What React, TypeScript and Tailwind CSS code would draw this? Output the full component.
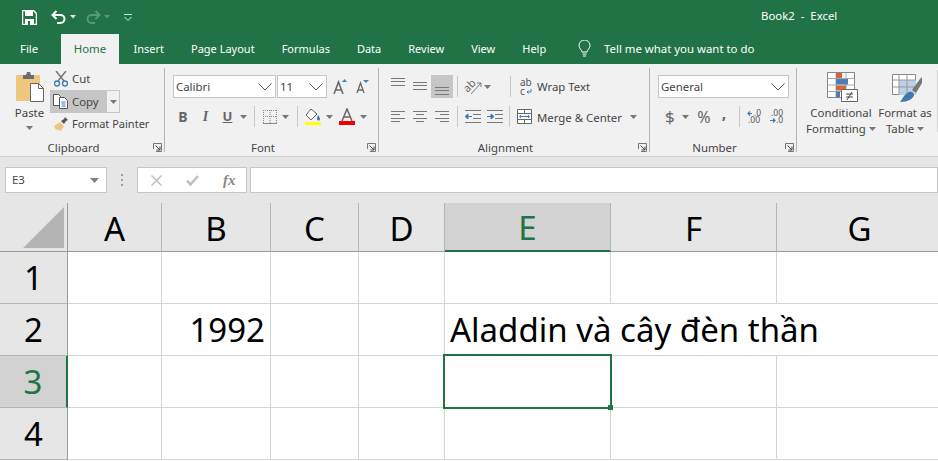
import React from 'react'

const columns = ['A', 'B', 'C', 'D', 'E', 'F', 'G']
const tabs = ['Insert', 'Page Layout', 'Formulas', 'Data', 'Review', 'View', 'Help']
const rows: { n: number; b?: string; e?: string }[] = [
  { n: 1 },
  { n: 2, b: '1992', e: 'Aladdin và cây đèn thần' },
  { n: 3 },
  { n: 4 },
]

function Caret({ className = '' }: { className?: string }) {
  return (
    <svg width="7" height="4" viewBox="0 0 7 4" className={`shrink-0 ${className}`}>
      <path d="M0 0h7L3.5 4z" fill="#777" />
    </svg>
  )
}

function Chevron({ className = '' }: { className?: string }) {
  return (
    <svg width="14" height="8" viewBox="0 0 14 8" className={`shrink-0 ${className}`}>
      <path d="M.5.5 7 7 13.5.5" fill="none" stroke="#555" />
    </svg>
  )
}

function Sep({ className = '' }: { className?: string }) {
  return <div className={`w-px h-[21px] bg-[#c6c6c6] shrink-0 ${className}`} />
}

function Launcher() {
  return (
    <svg width="9" height="9" viewBox="0 0 9 9" className="absolute right-[2px] bottom-0">
      <path d="M.5 6V.5H8.5V8.5H3" fill="none" stroke="#777" />
      <path d="M2.5 2.5 7 7M7 3.5V7H3.5" fill="none" stroke="#444" />
    </svg>
  )
}

function Lines({ rows, y }: { rows: [number, number][]; y: number }) {
  return (
    <svg width="14" height="17" viewBox="0 0 14 17" className="shrink-0">
      {rows.map(([a, b], i) => (
        <path key={i} d={`M${a} ${Math.round(y + i * 3.4) + 0.5}H${b}`} stroke="#777" />
      ))}
    </svg>
  )
}

function Cell22({ active, children }: { active?: boolean; children: React.ReactNode }) {
  return (
    <div className={`w-[22px] h-[23px] flex items-center justify-center shrink-0 ${active ? 'bg-[#c6c6c6]' : ''}`}>
      {children}
    </div>
  )
}

function Group({ w, label, launcher, children }: { w: string; label: string; launcher?: boolean; children: React.ReactNode }) {
  return (
    <div className={`relative h-[84px] mt-[4px] flex flex-col shrink-0 border-r border-[#b4b4b4] ${w}`}>
      <div className="h-[72px] shrink-0">{children}</div>
      <div className="h-[16px] leading-[16px] text-center pr-[17px] shrink-0">{label}</div>
      {launcher && <Launcher />}
    </div>
  )
}

function Box({ w, text, pad }: { w: string; text: string; pad: string }) {
  return (
    <div className={`h-[23px] bg-white border border-[#c6c6c6] flex items-center justify-between shrink-0 ${w} ${pad} pr-[3px]`}>
      <span>{text}</span>
      <Chevron />
    </div>
  )
}

function Clipboard() {
  return (
    <div className="flex">
      <div className="w-[50px] shrink-0 flex flex-col items-center pl-[9px] pt-[4px]">
        <svg width="28" height="30" viewBox="0 0 28 30">
          <rect x="0" y="3" width="24" height="26" rx="1" fill="#efc67e" />
          <path d="M7 3h3l1-3h3l1 3h3v4H7z" fill="#6d6d6d" />
          <path d="M14.5 11.5h8l5 5v13h-13z" fill="#fff" stroke="#666" />
          <path d="M22.5 11.5v5h5" fill="none" stroke="#666" />
        </svg>
        <span className="leading-[16px] mt-[3px]">Paste</span>
        <Caret className="mt-[5px]" />
      </div>
      <div className="flex flex-col">
        <div className="h-[22px] flex items-center pl-[4px] gap-[4px]">
          <svg width="14" height="16" viewBox="0 0 14 16">
            <path d="M2 0l8 10M12 0 4 10" stroke="#777" strokeWidth="1.5" />
            <circle cx="3" cy="12.5" r="2.5" fill="none" stroke="#3e78b3" strokeWidth="1.3" />
            <circle cx="11" cy="12.5" r="2.5" fill="none" stroke="#3e78b3" strokeWidth="1.3" />
          </svg>
          <span>Cut</span>
        </div>
        <div className="h-[23px] flex w-[70px]">
          <div className="w-[57px] bg-[#c6c6c6] flex items-center pl-[3px] gap-[4px]">
            <svg width="15" height="15" viewBox="0 0 15 15">
              <path d="M.5.5h5l2 2v9h-7z" fill="#fff" stroke="#555" />
              <path d="M6.5 3.5h5l3 3v8h-8z" fill="#fff" stroke="#555" />
              <path d="M8.5 8h4M8.5 10h4M8.5 12h4" stroke="#3e78b3" />
            </svg>
            <span>Copy</span>
          </div>
          <div className="w-[13px] border border-l-0 border-[#c6c6c6] flex items-center justify-center">
            <Caret />
          </div>
        </div>
        <div className="h-[23px] flex items-center pl-[3px] gap-[4px]">
          <svg width="15" height="15" viewBox="0 0 15 15">
            <path d="M1 9 7 5l4 4-3 5-2-1-1 1-1-2-1 1-1-2z" fill="#edc587" />
            <path d="M8 4l3-2 1-2 3 3-2 1-2 3z" fill="#555" />
          </svg>
          <span className="whitespace-nowrap text-[11px]">Format Painter</span>
        </div>
      </div>
    </div>
  )
}

function Font() {
  return (
    <div>
      <div className="flex items-center mt-[7px] pl-[8px] h-[23px]">
        <Box w="w-[103px]" text="Calibri" pad="pl-[2px]" />
        <Box w="w-[50px] ml-px" text="11" pad="pl-[2px]" />
        <svg width="15" height="15" viewBox="0 0 15 15" className="ml-[6px]">
          <path d="M1 15 5.5 3 10 15M2.5 11h6" fill="none" stroke="#666" strokeWidth="1.5" />
          <path d="M9 3l2.5-3L14 3z" fill="#4a7fb5" />
        </svg>
        <svg width="13" height="13" viewBox="0 0 13 13" className="ml-[8px]">
          <path d="M1 13 4.5 3 8 13M2 10h5" fill="none" stroke="#666" strokeWidth="1.3" />
          <path d="M7 0h6l-3 3z" fill="#4a7fb5" />
        </svg>
      </div>
      <div className="flex items-center mt-[7px] h-[23px] text-[#666]">
        <span className="ml-[13px] w-[10px] font-bold text-[14px] text-center">B</span>
        <span className="ml-[13px] w-[9px] italic font-bold text-[14px] text-center font-['Liberation_Serif',serif]">I</span>
        <span className="ml-[12px] w-[11px] font-bold text-[13px] text-center underline">U</span>
        <Caret className="ml-[7px]" />
        <Sep className="ml-[7px]" />
        <svg width="14" height="14" viewBox="0 0 14 14" className="ml-[8px]">
          <path d="M0 .5h14M0 6.5h14M.5 0v13M7 0v13M13.5 0v13" stroke="#888" strokeDasharray="1 1" fill="none" />
          <path d="M0 13.5h14" stroke="#888" />
        </svg>
        <Caret className="ml-[5px]" />
        <Sep className="ml-[8px]" />
        <svg width="16" height="17" viewBox="0 0 16 17" className="ml-[7px]">
          <path d="M6 1 1 7l5 5 6-6z" fill="#fff" stroke="#666" />
          <path d="M13 7c1.5 2 2 3 2 4a1.5 1.5 0 0 1-3 0c0-1 .5-2 1-4z" fill="#3e78b3" />
          <path d="M0 14h16v3H0z" fill="#ffff00" />
        </svg>
        <Caret className="ml-[5px]" />
        <svg width="16" height="17" viewBox="0 0 16 17" className="ml-[6px]">
          <path d="M3 13 8 1l5 12M4.5 9h7" fill="none" stroke="#666" strokeWidth="1.5" />
          <path d="M0 13h16v4H0z" fill="#f00000" />
        </svg>
        <Caret className="ml-[5px]" />
      </div>
    </div>
  )
}

function Alignment() {
  const indent = (flip: boolean) => (
    <svg width="16" height="13" viewBox="0 0 16 13" className="shrink-0">
      <path d="M0 .5h16M0 12.5h16M8 4.5h8M8 8.5h8" stroke="#777" />
      <path d={flip ? 'M0 6.5h4V4l3 2.5L4 9V6.5' : 'M7 6.5H3V4L0 6.5 3 9V6.5'} fill="#3e78b3" stroke="#3e78b3" />
    </svg>
  )
  const full: [number, number][] = [[0, 14], [0, 14], [0, 14]]
  return (
    <div>
      <div className="flex items-center mt-[7px] pl-[8px] h-[23px]">
        <Cell22><Lines rows={full} y={0} /></Cell22>
        <Cell22><Lines rows={full} y={4} /></Cell22>
        <Cell22 active><Lines rows={full} y={9} /></Cell22>
        <Sep className="ml-[4px]" />
        <svg width="17" height="17" viewBox="0 0 17 17" className="ml-[7px] shrink-0 overflow-visible">
          <text x="0" y="11" fontSize="11" fill="#666" fontFamily="Noto Sans" transform="rotate(-45 6 10)">ab</text>
          <path d="M6 16 16 5M12 5h4v4" fill="none" stroke="#777" />
        </svg>
        <Caret className="ml-[2px]" />
        <Sep className="ml-[19px]" />
        <svg width="12" height="18" viewBox="0 0 12 18" className="ml-[9px] shrink-0 overflow-visible">
          <text x="0" y="8" fontSize="10" fill="#555" fontFamily="Noto Sans">ab</text>
          <text x="0" y="17" fontSize="10" fill="#555" fontFamily="Noto Sans">c</text>
          <path d="M11 11v3H7M8.500 12.500 7 14l1.500 1.500" fill="none" stroke="#3e78b3" />
        </svg>
        <span className="ml-[5px] whitespace-nowrap">Wrap Text</span>
      </div>
      <div className="flex items-center mt-[7px] pl-[8px] h-[23px]">
        <Cell22><Lines rows={[[0, 14], [0, 9], [0, 14], [0, 9]]} y={3} /></Cell22>
        <Cell22><Lines rows={[[0, 14], [3, 11], [0, 14], [3, 11]]} y={3} /></Cell22>
        <Cell22><Lines rows={[[0, 14], [5, 14], [0, 14], [5, 14]]} y={3} /></Cell22>
        <Sep className="ml-[4px]" />
        <div className="ml-[7px]">{indent(false)}</div>
        <div className="ml-[6px]">{indent(true)}</div>
        <Sep className="ml-[6px]" />
        <svg width="15" height="15" viewBox="0 0 15 15" className="ml-[7px] shrink-0">
          <path d="M.5.5h14v14H.5zM.5 4.5h14M.5 10.5h14M7.5.5v4M7.5 10.5v4" fill="#fff" stroke="#666" />
          <path d="M3 7.5h9" stroke="#3e78b3" />
          <path d="M2 7.5 4 5.5v4zM13 7.5l-2-2v4z" fill="#3e78b3" />
        </svg>
        <span className="ml-[5px] pt-[2px] whitespace-nowrap">Merge &amp; Center</span>
        <Caret className="ml-[8px]" />
      </div>
    </div>
  )
}

function NumberGroup() {
  return (
    <div>
      <div className="flex items-center mt-[7px] pl-[8px] h-[23px]">
        <Box w="w-[131px]" text="General" pad="pl-[2px]" />
      </div>
      <div className="flex items-center mt-[7px] h-[23px] text-[#666]">
        <span className="ml-[15px] w-[9px] text-[17px] text-center">$</span>
        <Caret className="ml-[8px]" />
        <span className="ml-[8px] w-[14px] text-[16px] text-center">%</span>
        <span className="ml-[9px] w-[8px] text-[16px] font-bold text-center leading-[10px] pb-[8px]">,</span>
        <Sep className="ml-[11px]" />
        <svg width="14" height="14" viewBox="0 0 14 14" className="ml-[7px] shrink-0 overflow-visible">
          <path d="M5 3.5H1M3 1.5l-2 2 2 2" fill="none" stroke="#3e78b3" strokeWidth="1.2" />
          <text x="7" y="6" fontSize="8.500" fill="#555" fontFamily="Noto Sans">.0</text>
          <text x="1" y="13" fontSize="8.500" fill="#555" fontFamily="Noto Sans">.00</text>
        </svg>
        <svg width="14" height="14" viewBox="0 0 14 14" className="ml-[8px] shrink-0 overflow-visible">
          <text x="2" y="6" fontSize="8.500" fill="#555" fontFamily="Noto Sans">.00</text>
          <text x="7" y="13" fontSize="8.500" fill="#555" fontFamily="Noto Sans">.0</text>
          <path d="M1 10.5h5M4 8.5l2 2-2 2" fill="none" stroke="#3e78b3" strokeWidth="1.2" />
        </svg>
      </div>
    </div>
  )
}

function Styles() {
  return (
    <div className="flex mt-[4px] h-[84px]">
      <div className="w-[86px] shrink-0 flex flex-col items-center pt-[4px] pl-[2px]">
        <svg width="31" height="30" viewBox="0 0 31 30" className="ml-[2px]">
          <path d="M.5.5h27v25H.5z" fill="#fff" stroke="#888" />
          <path d="M9 .5v25M19 .5v25M.5 6.5h27M.5 13h27M.5 19.5h27" stroke="#aaa" />
          <path d="M9 1h6v5H9zM9 13.5h10v5H9z" fill="#d9633c" />
          <path d="M9 7h12v5.5H9zM9 19.5h4v6H9z" fill="#4a7fb5" />
          <path d="M14.5 17.5h16v12h-16z" fill="#fff" stroke="#666" />
          <path d="M19 22h7M19 25h7M25 20l-5 8" fill="none" stroke="#444" />
        </svg>
        <span className="leading-[16px] mt-[3px]">Conditional</span>
        <span className="leading-[16px] flex items-center gap-[3px] whitespace-nowrap">
          Formatting <Caret />
        </span>
      </div>
      <div className="w-[52px] shrink-0 flex flex-col items-center pt-[6px] ml-[-4px]">
        <svg width="30" height="28" viewBox="0 0 30 28" className="ml-[3px]">
          <path d="M.5.5h23v20H.5z" fill="#fff" stroke="#888" />
          <path d="M7 6h17v15H7z" fill="#bcd0e6" />
          <path d="M7 .5v20M15 .5v20M.5 6h23M.5 13h23" stroke="#999" />
          <path d="M20 16l8-11 2-2v6l-6 10z" fill="#777" />
          <path d="M8 28c2-2 4-8 9-10 3-1 5 1 5 3-1 4-6 7-14 7z" fill="#3e78b3" />
        </svg>
        <span className="leading-[16px] mt-[3px] whitespace-nowrap">Format as</span>
        <span className="leading-[16px] flex items-center gap-[3px]">
          Table <Caret />
        </span>
      </div>
      <div className="ml-[6px] h-[62px] mt-[2px] w-[10px] bg-white border border-[#d4d4d4] shrink-0" />
    </div>
  )
}

export default function App() {
  return (
    <div className="w-[938px] h-[461px] overflow-hidden bg-white font-['Noto_Sans',sans-serif] text-[11.4px] text-[#444]">
      {/* Title bar */}
      <div className="h-[34px] bg-[#217346] flex items-center text-white relative">
        <svg width="15" height="15" viewBox="0 0 15 15" className="ml-[22px] shrink-0">
          <path d="M.5.5h11l3 3v11H.5z" fill="none" stroke="#fff" strokeWidth="1.5" />
          <path d="M3 1h8v5H3zM3 9h9v6H3z" fill="#fff" />
          <path d="M6 11h2v4H6z" fill="#217346" />
        </svg>
        <svg width="16" height="14" viewBox="0 0 16 14" className="ml-[14px] shrink-0">
          <path d="M5.5 1 1.500 5l4 4M2 5h7.500a4 4 0 0 1 0 8H6" fill="none" stroke="#fff" strokeWidth="2" />
        </svg>
        <svg width="6" height="4" viewBox="0 0 6 4" className="ml-[3px] shrink-0"><path d="M0 0h6L3 3.5z" fill="#e6e6e6" /></svg>
        <svg width="16" height="14" viewBox="0 0 16 14" className="ml-[9px] shrink-0">
          <path d="M10.5 1l4 4-4 4M14 5H6.500a4 4 0 0 0 0 8H10" fill="none" stroke="#5b9877" strokeWidth="2" />
        </svg>
        <svg width="6" height="4" viewBox="0 0 6 4" className="ml-[3px] shrink-0"><path d="M0 0h6L3 3.5z" fill="#5b9877" /></svg>
        <svg width="8" height="7" viewBox="0 0 8 7" className="ml-[14px] shrink-0">
          <path d="M0 .5h8M.5 3 4 6.5 7.5 3" fill="none" stroke="#d8e6de" />
        </svg>
        <span className="absolute left-[761px] top-[7px] whitespace-pre">Book2  -  Excel</span>
      </div>

      {/* Tabs */}
      <div className="h-[30px] bg-[#217346] flex text-white">
        <div className="w-[61px] pl-[20px] leading-[30px] shrink-0">File</div>
        <div className="w-[58px] bg-[#f1f1f1] text-[#217346] text-center leading-[30px] shrink-0">Home</div>
        <div className="flex text-[11px] w-[459px] shrink-0 pl-px">
          {tabs.map((tab) => (
            <div key={tab} className="px-[13.5px] leading-[30px] whitespace-nowrap">{tab}</div>
          ))}
        </div>
        <svg width="13" height="17" viewBox="0 0 13 17" className="mt-[6px] shrink-0">
          <path d="M4 12c0-2-3-3.500-3-6.500a5.500 5.500 0 0 1 11 0c0 3-3 4.500-3 6.500z" fill="none" stroke="#fff" />
          <path d="M4.500 14h4M5 16h3" stroke="#fff" />
        </svg>
        <div className="ml-[13px] leading-[30px] whitespace-nowrap">Tell me what you want to do</div>
      </div>

      {/* Ribbon */}
      <div className="h-[93px] bg-[#f1f1f1] border-b border-[#d2d2d2] flex">
        <Group w="w-[165px]" label="Clipboard" launcher><Clipboard /></Group>
        <Group w="w-[214px]" label="Font" launcher><Font /></Group>
        <Group w="w-[271px]" label="Alignment" launcher><Alignment /></Group>
        <Group w="w-[147px]" label="Number" launcher><NumberGroup /></Group>
        <Styles />
      </div>

      {/* Formula bar */}
      <div className="h-[46px] bg-[#e6e6e6] flex pt-[10px]">
        <div className="ml-[5px] w-[102px] h-[26px] bg-white border border-[#c6c6c6] flex items-center justify-between pl-[6px] pr-[7px] shrink-0">
          <span>E3</span>
          <svg width="9" height="5" viewBox="0 0 9 5"><path d="M0 0h9L4.5 5z" fill="#808080" /></svg>
        </div>
        <div className="w-[30px] h-[26px] flex flex-col items-center justify-center gap-[3px] shrink-0">
          <i className="w-[2px] h-[2px] bg-[#a0a0a0]" />
          <i className="w-[2px] h-[2px] bg-[#a0a0a0]" />
          <i className="w-[2px] h-[2px] bg-[#a0a0a0]" />
        </div>
        <div className="w-[110px] h-[26px] bg-white border border-[#c6c6c6] flex items-center shrink-0">
          <svg width="11" height="11" viewBox="0 0 11 11" className="ml-[13px]">
            <path d="M.5.5l10 10M10.500.5l-10 10" stroke="#c0c0c0" strokeWidth="1.5" />
          </svg>
          <svg width="13" height="11" viewBox="0 0 13 11" className="ml-[24px]">
            <path d="M1 5.5 4.500 9.500 12 1" fill="none" stroke="#c0c0c0" strokeWidth="2.5" />
          </svg>
          <span className="ml-[24px] italic font-bold text-[15px] leading-none text-[#888] font-['Liberation_Serif',serif]">fx</span>
        </div>
        <div className="ml-[3px] flex-1 h-[26px] bg-white border border-[#c6c6c6]" />
      </div>

      {/* Sheet */}
      <div className="grid grid-cols-[68px_94px_109px_88px_86px_166px_166px_166px] grid-rows-[49px_52px_52px_52px_52px] text-black text-[33px]">
        <div className="bg-[#e6e6e6] border-r border-b border-[#9a9a9a] flex items-end justify-end pr-[3px] pb-[3px]">
          <svg width="41" height="41" viewBox="0 0 41 41"><path d="M41 0v41H0z" fill="#b4b4b4" /></svg>
        </div>
        {columns.map((c) => (
          <div
            key={c}
            className={`flex items-center justify-center leading-none pt-[2px] ${
              c === 'E'
                ? 'bg-[#d2d2d2] text-[#217346] border-b-2 border-[#217346] border-r border-r-[#b4b4b4]'
                : 'bg-[#e6e6e6] border-b border-[#9a9a9a] border-r border-r-[#b4b4b4]'
            }`}
          >
            {c}
          </div>
        ))}
        {rows.map((r) => (
          <React.Fragment key={r.n}>
            <div
              className={`flex items-center justify-center leading-none ${
                r.n === 3
                  ? 'bg-[#d2d2d2] text-[#217346] border-r-2 border-[#217346] border-b border-b-[#b4b4b4]'
                  : 'bg-[#e6e6e6] border-r border-[#9a9a9a] border-b border-b-[#b4b4b4]'
              }`}
            >
              {r.n}
            </div>
            {columns.map((c) => (
              <div
                key={c}
                className={`relative border-b border-[#d4d4d4] flex items-center leading-none ${
                  r.n === 2 && (c === 'E' || c === 'F') ? '' : 'border-r'
                }`}
              >
                {c === 'B' && r.b && <span className="w-full text-right pr-[5px]">{r.b}</span>}
                {c === 'E' && r.e && <span className="pl-[5px] whitespace-nowrap">{r.e}</span>}
                {c === 'E' && r.n === 3 && (
                  <div className="absolute left-[-2px] top-[-2px] w-[169px] h-[55px] border-2 border-[#217346] z-10">
                    <div className="absolute right-[-3px] bottom-[-3px] w-[5px] h-[5px] bg-[#217346]" />
                  </div>
                )}
              </div>
            ))}
          </React.Fragment>
        ))}
      </div>
    </div>
  )
}
